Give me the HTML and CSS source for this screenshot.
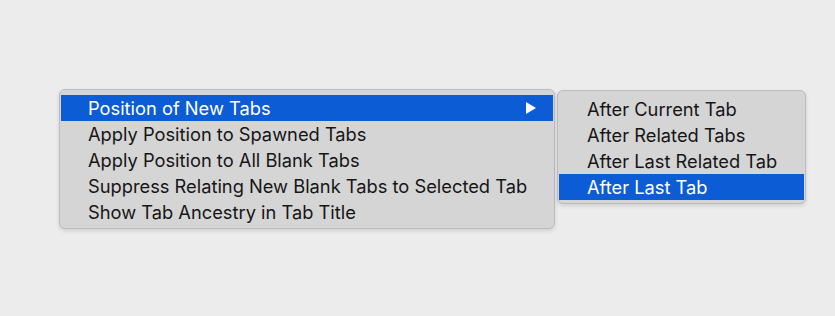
FILE: index.html
```html
<!DOCTYPE html>
<html>
<head>
<meta charset="utf-8">
<link rel="stylesheet" href="styles.css">
</head>
<body>
<div class="stage">
  <div class="menu main">
    <div class="item active"><span>Position of New Tabs</span><svg class="arrow" width="10" height="12" viewBox="0 0 10 12"><path d="M0 0 L10 6 L0 12 Z" fill="#fff"/></svg></div>
    <div class="item">Apply Position to Spawned Tabs</div>
    <div class="item">Apply Position to All Blank Tabs</div>
    <div class="item">Suppress Relating New Blank Tabs to Selected Tab</div>
    <div class="item">Show Tab Ancestry in Tab Title</div>
  </div>
  <div class="menu sub">
    <div class="item">After Current Tab</div>
    <div class="item">After Related Tabs</div>
    <div class="item">After Last Related Tab</div>
    <div class="item active">After Last Tab</div>
  </div>
</div>
</body>
</html>
```
FILE: styles.css
```css
html, body {
  margin: 0;
  padding: 0;
  background: #ececec;
  width: 835px;
  height: 316px;
  overflow: hidden;
}
.stage {
  display: flex;
  align-items: flex-start;
  gap: 2px;
  padding: 89px 0 0 59px;
}
.menu {
  background: #d5d5d5;
  border: 1px solid #bcbcbc;
  border-radius: 6px;
  box-shadow: 0 2px 4px rgba(0,0,0,0.12);
  padding: 5px 1px;
  font-family: Inter, "Liberation Sans", Arial, sans-serif;
  font-size: 18.3px;
  color: #161616;
  box-sizing: border-box;
}
.main { width: 496px; height: 140px; }
.sub { width: 249px; height: 114px; margin-top: 1px; }
.item {
  height: 26px;
  line-height: 26px;
  padding-left: 27px;
  padding-right: 17px;
  display: flex;
  align-items: center;
  justify-content: space-between;
  white-space: nowrap;
}
.sub .item { padding-left: 28px; }
.item.active {
  background: #0b5cd5;
  color: #ffffff;
}
.arrow { display: block; }
```
